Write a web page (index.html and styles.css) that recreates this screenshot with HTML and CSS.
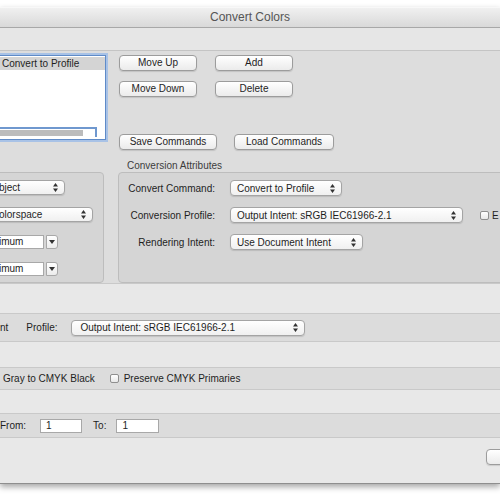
FILE: index.html
```html
<!DOCTYPE html>
<html>
<head>
<meta charset="utf-8">
<title>Convert Colors</title>
<link rel="stylesheet" href="styles.css">
</head>
<body>
<div class="window">
  <div class="titlebar">Convert Colors</div>
  <div class="toolbar"></div>
  <div class="main">
    <div class="cmd-row">
      <div class="listbox">
        <div class="list-item selected">Convert to Profile</div>
        <div class="hscroll"><div class="thumb"></div></div>
      </div>
      <div class="cmd-buttons">
        <div class="btn-grid">
          <div class="btn">Move Up</div>
          <div class="btn">Add</div>
          <div class="btn">Move Down</div>
          <div class="btn">Delete</div>
        </div>
        <div class="file-btns">
          <div class="btn save">Save Commands</div>
          <div class="btn load">Load Commands</div>
        </div>
      </div>
    </div>
    <div class="groups">
      <div class="group left">
        <div class="popup p-object"><span>bject</span><svg class="arr" width="5" height="9" viewBox="0 0 5 9"><path d="M2.5 0L5 3.5H0Z M2.5 9L5 5.5H0Z"/></svg></div>
        <div class="popup p-space"><span>olorspace</span><svg class="arr" width="5" height="9" viewBox="0 0 5 9"><path d="M2.5 0L5 3.5H0Z M2.5 9L5 5.5H0Z"/></svg></div>
        <div class="combo"><div class="field">imum</div><div class="cbtn"><svg width="6" height="4" viewBox="0 0 6 4"><path d="M0 0H6L3 4Z"/></svg></div></div>
        <div class="combo"><div class="field">imum</div><div class="cbtn"><svg width="6" height="4" viewBox="0 0 6 4"><path d="M0 0H6L3 4Z"/></svg></div></div>
      </div>
      <div class="right-wrap">
        <div class="group-label">Conversion Attributes</div>
        <div class="group right">
          <div class="attr-row">
            <div class="attr-label">Convert Command:</div>
            <div class="popup p-cmd"><span>Convert to Profile</span><svg class="arr" width="5" height="9" viewBox="0 0 5 9"><path d="M2.5 0L5 3.5H0Z M2.5 9L5 5.5H0Z"/></svg></div>
          </div>
          <div class="attr-row">
            <div class="attr-label">Conversion Profile:</div>
            <div class="popup p-prof"><span>Output Intent: sRGB IEC61966-2.1</span><svg class="arr" width="5" height="9" viewBox="0 0 5 9"><path d="M2.5 0L5 3.5H0Z M2.5 9L5 5.5H0Z"/></svg></div>
            <div class="check c-embed"></div>
            <div class="check-label">E</div>
          </div>
          <div class="attr-row">
            <div class="attr-label">Rendering Intent:</div>
            <div class="popup p-intent"><span>Use Document Intent</span><svg class="arr" width="5" height="9" viewBox="0 0 5 9"><path d="M2.5 0L5 3.5H0Z M2.5 9L5 5.5H0Z"/></svg></div>
          </div>
        </div>
      </div>
    </div>
  </div>
  <div class="band light b1"></div>
  <div class="band dark b2">
    <div class="intent-label">nt</div>
    <div class="profile-label">Profile:</div>
    <div class="popup p-out"><span>Output Intent: sRGB IEC61966-2.1</span><svg class="arr" width="5" height="9" viewBox="0 0 5 9"><path d="M2.5 0L5 3.5H0Z M2.5 9L5 5.5H0Z"/></svg></div>
  </div>
  <div class="band light b3"></div>
  <div class="band dark b4">
    <div class="gray-label">Gray to CMYK Black</div>
    <div class="check c-prim"></div>
    <div class="prim-label">Preserve CMYK Primaries</div>
  </div>
  <div class="band light b5"></div>
  <div class="band dark b6">
    <div class="from-label">From:</div>
    <div class="num from">1</div>
    <div class="to-label">To:</div>
    <div class="num to">1</div>
  </div>
  <div class="band light b7">
    <div class="btn cancel"></div>
  </div>
</div>
</body>
</html>
```
FILE: styles.css
```css
* { box-sizing: border-box; }
html, body { margin: 0; padding: 0; }
body {
  width: 500px;
  height: 500px;
  overflow: hidden;
  background: #ffffff;
  font-family: "Liberation Sans", Arial, sans-serif;
  font-size: 10px;
  color: #1e1e1e;
}
.window {
  width: 500px;
  margin-top: 7px;
  background: #e8e8e8;
  border-bottom: 1px solid #8e8e8e;
  box-shadow: 0 3px 6px rgba(0, 0, 0, 0.35);
}
.titlebar {
  height: 21px;
  line-height: 19px;
  text-align: center;
  font-size: 12px;
  color: #555555;
  background: linear-gradient(#f0f0f0, #d9d9d9);
  border-top: 1px solid #f8f8f8;
  border-bottom: 1px solid #a8a8a8;
}
.toolbar {
  height: 23px;
  background: #e6e6e6;
  border-bottom: 1px solid #c4c4c4;
}
.main {
  height: 232px;
  background: #dddddd;
  padding-top: 4px;
  display: flex;
  flex-direction: column;
}
.cmd-row {
  display: flex;
  align-items: flex-start;
}
.listbox {
  margin-left: -14px;
  width: 120px;
  height: 85px;
  background: #ffffff;
  border: 1px solid #5f8bc8;
  box-shadow: 0 0 0 2px #a8c2e6;
  display: flex;
  flex-direction: column;
  padding-top: 1px;
}
.list-item {
  height: 13px;
  line-height: 13px;
  padding-left: 15px;
  white-space: nowrap;
}
.list-item.selected { background: #d4d4d4; }
.hscroll {
  margin-top: auto;
  margin-right: 8px;
  margin-bottom: 2px;
  height: 10px;
  border-top: 2px solid #6f98cf;
  border-right: 2px solid #6f98cf;
  padding-top: 1px;
}
.hscroll .thumb {
  width: 96px;
  height: 6px;
  background: #bcbcbc;
}
.cmd-buttons {
  margin-left: 13px;
  display: flex;
  flex-direction: column;
}
.btn-grid {
  display: grid;
  grid-template-columns: 78px 78px;
  column-gap: 18px;
  row-gap: 10px;
}
.btn {
  height: 16px;
  line-height: 14px;
  border: 1px solid #9c9c9c;
  border-radius: 4px;
  background: linear-gradient(#ffffff, #ebebeb);
  text-align: center;
  white-space: nowrap;
  box-shadow: 0 1px 1px rgba(0, 0, 0, 0.12);
}
.file-btns {
  margin-top: 37px;
  display: flex;
  gap: 17px;
}
.save { width: 98px; }
.load { width: 100px; }

.groups {
  display: flex;
  align-items: flex-end;
  margin-top: 10px;
}
.group {
  height: 111px;
  background: #d5d5d5;
  border: 1px solid #bdbdbd;
  border-radius: 4px;
}
.group.left {
  flex: none;
  margin-left: -50px;
  width: 154px;
  padding: 7px 0 0 10px;
  display: flex;
  flex-direction: column;
  align-items: flex-start;
}
.right-wrap {
  flex: none;
  width: 420px;
  margin-left: 14px;
}
.group-label {
  height: 12px;
  line-height: 12px;
  padding-left: 9px;
  color: #3c3c3c;
}
.group.right {
  padding: 7px 0 0 8px;
  display: flex;
  flex-direction: column;
  gap: 11px;
}
.attr-row {
  display: flex;
  align-items: center;
  height: 16px;
}
.attr-label {
  width: 88px;
  margin-right: 15px;
  text-align: right;
  white-space: nowrap;
}

.popup {
  height: 16px;
  display: flex;
  align-items: center;
  padding-left: 6px;
  padding-right: 6px;
  background: linear-gradient(#ffffff, #f0f0f0);
  border: 1px solid #a4a4a4;
  border-radius: 4px;
  box-shadow: 0 1px 1px rgba(0, 0, 0, 0.12);
  white-space: nowrap;
  flex: none;
}
.popup .arr {
  margin-left: auto;
  fill: #333333;
}
.p-object { width: 104px; height: 15px; padding-left: 37px; }
.p-space { width: 132px; height: 15px; padding-left: 37px; margin-top: 12px; }
.p-cmd { width: 112px; }
.p-prof { width: 233px; }
.p-intent { width: 133px; }
.p-out { width: 234px; margin-left: 14px; padding-left: 8px; }

.combo {
  display: flex;
  gap: 2px;
  margin-left: 21px;
  margin-top: 13px;
}
.combo .field {
  width: 62px;
  height: 14px;
  line-height: 12px;
  padding-left: 16px;
  background: #ffffff;
  border: 1px solid #a8a8a8;
  white-space: nowrap;
}
.combo .cbtn {
  width: 12px;
  height: 14px;
  border: 1px solid #a8a8a8;
  border-radius: 0 3px 3px 0;
  background: linear-gradient(#ffffff, #ececec);
  display: flex;
  align-items: center;
  justify-content: center;
  fill: #333333;
}

.check {
  flex: none;
  width: 9px;
  height: 9px;
  border: 1px solid #8f8f8f;
  border-radius: 2px;
  background: linear-gradient(#ffffff, #e8e8e8);
}
.c-embed { margin-left: 17px; }
.check-label { margin-left: 3px; white-space: nowrap; }

.band {
  display: flex;
  align-items: center;
  border-top: 1px solid #c9c9c9;
  white-space: nowrap;
}
.light { background: #e8e8e8; }
.dark { background: #dcdcdc; }
.b1 { height: 30px; }
.b2 { height: 28px; }
.b3 { height: 26px; }
.b4 { height: 22px; }
.b5 { height: 24px; }
.b6 { height: 24px; }
.b7 { height: 46px; align-items: flex-start; padding-top: 11px; }

.intent-label { margin-left: 0; }
.profile-label { margin-left: 18px; }

.gray-label { margin-left: 3px; }
.c-prim { margin-left: 15px; }
.prim-label { margin-left: 5px; }

.from-label { margin-left: 0; }
.num {
  height: 14px;
  line-height: 12px;
  padding-left: 5px;
  background: #ffffff;
  border: 1px solid #a8a8a8;
}
.from { width: 42px; margin-left: 14px; }
.to-label { margin-left: 11px; }
.to { width: 43px; margin-left: 10px; }

.cancel {
  flex: none;
  width: 80px;
  margin-left: 486px;
}
```
